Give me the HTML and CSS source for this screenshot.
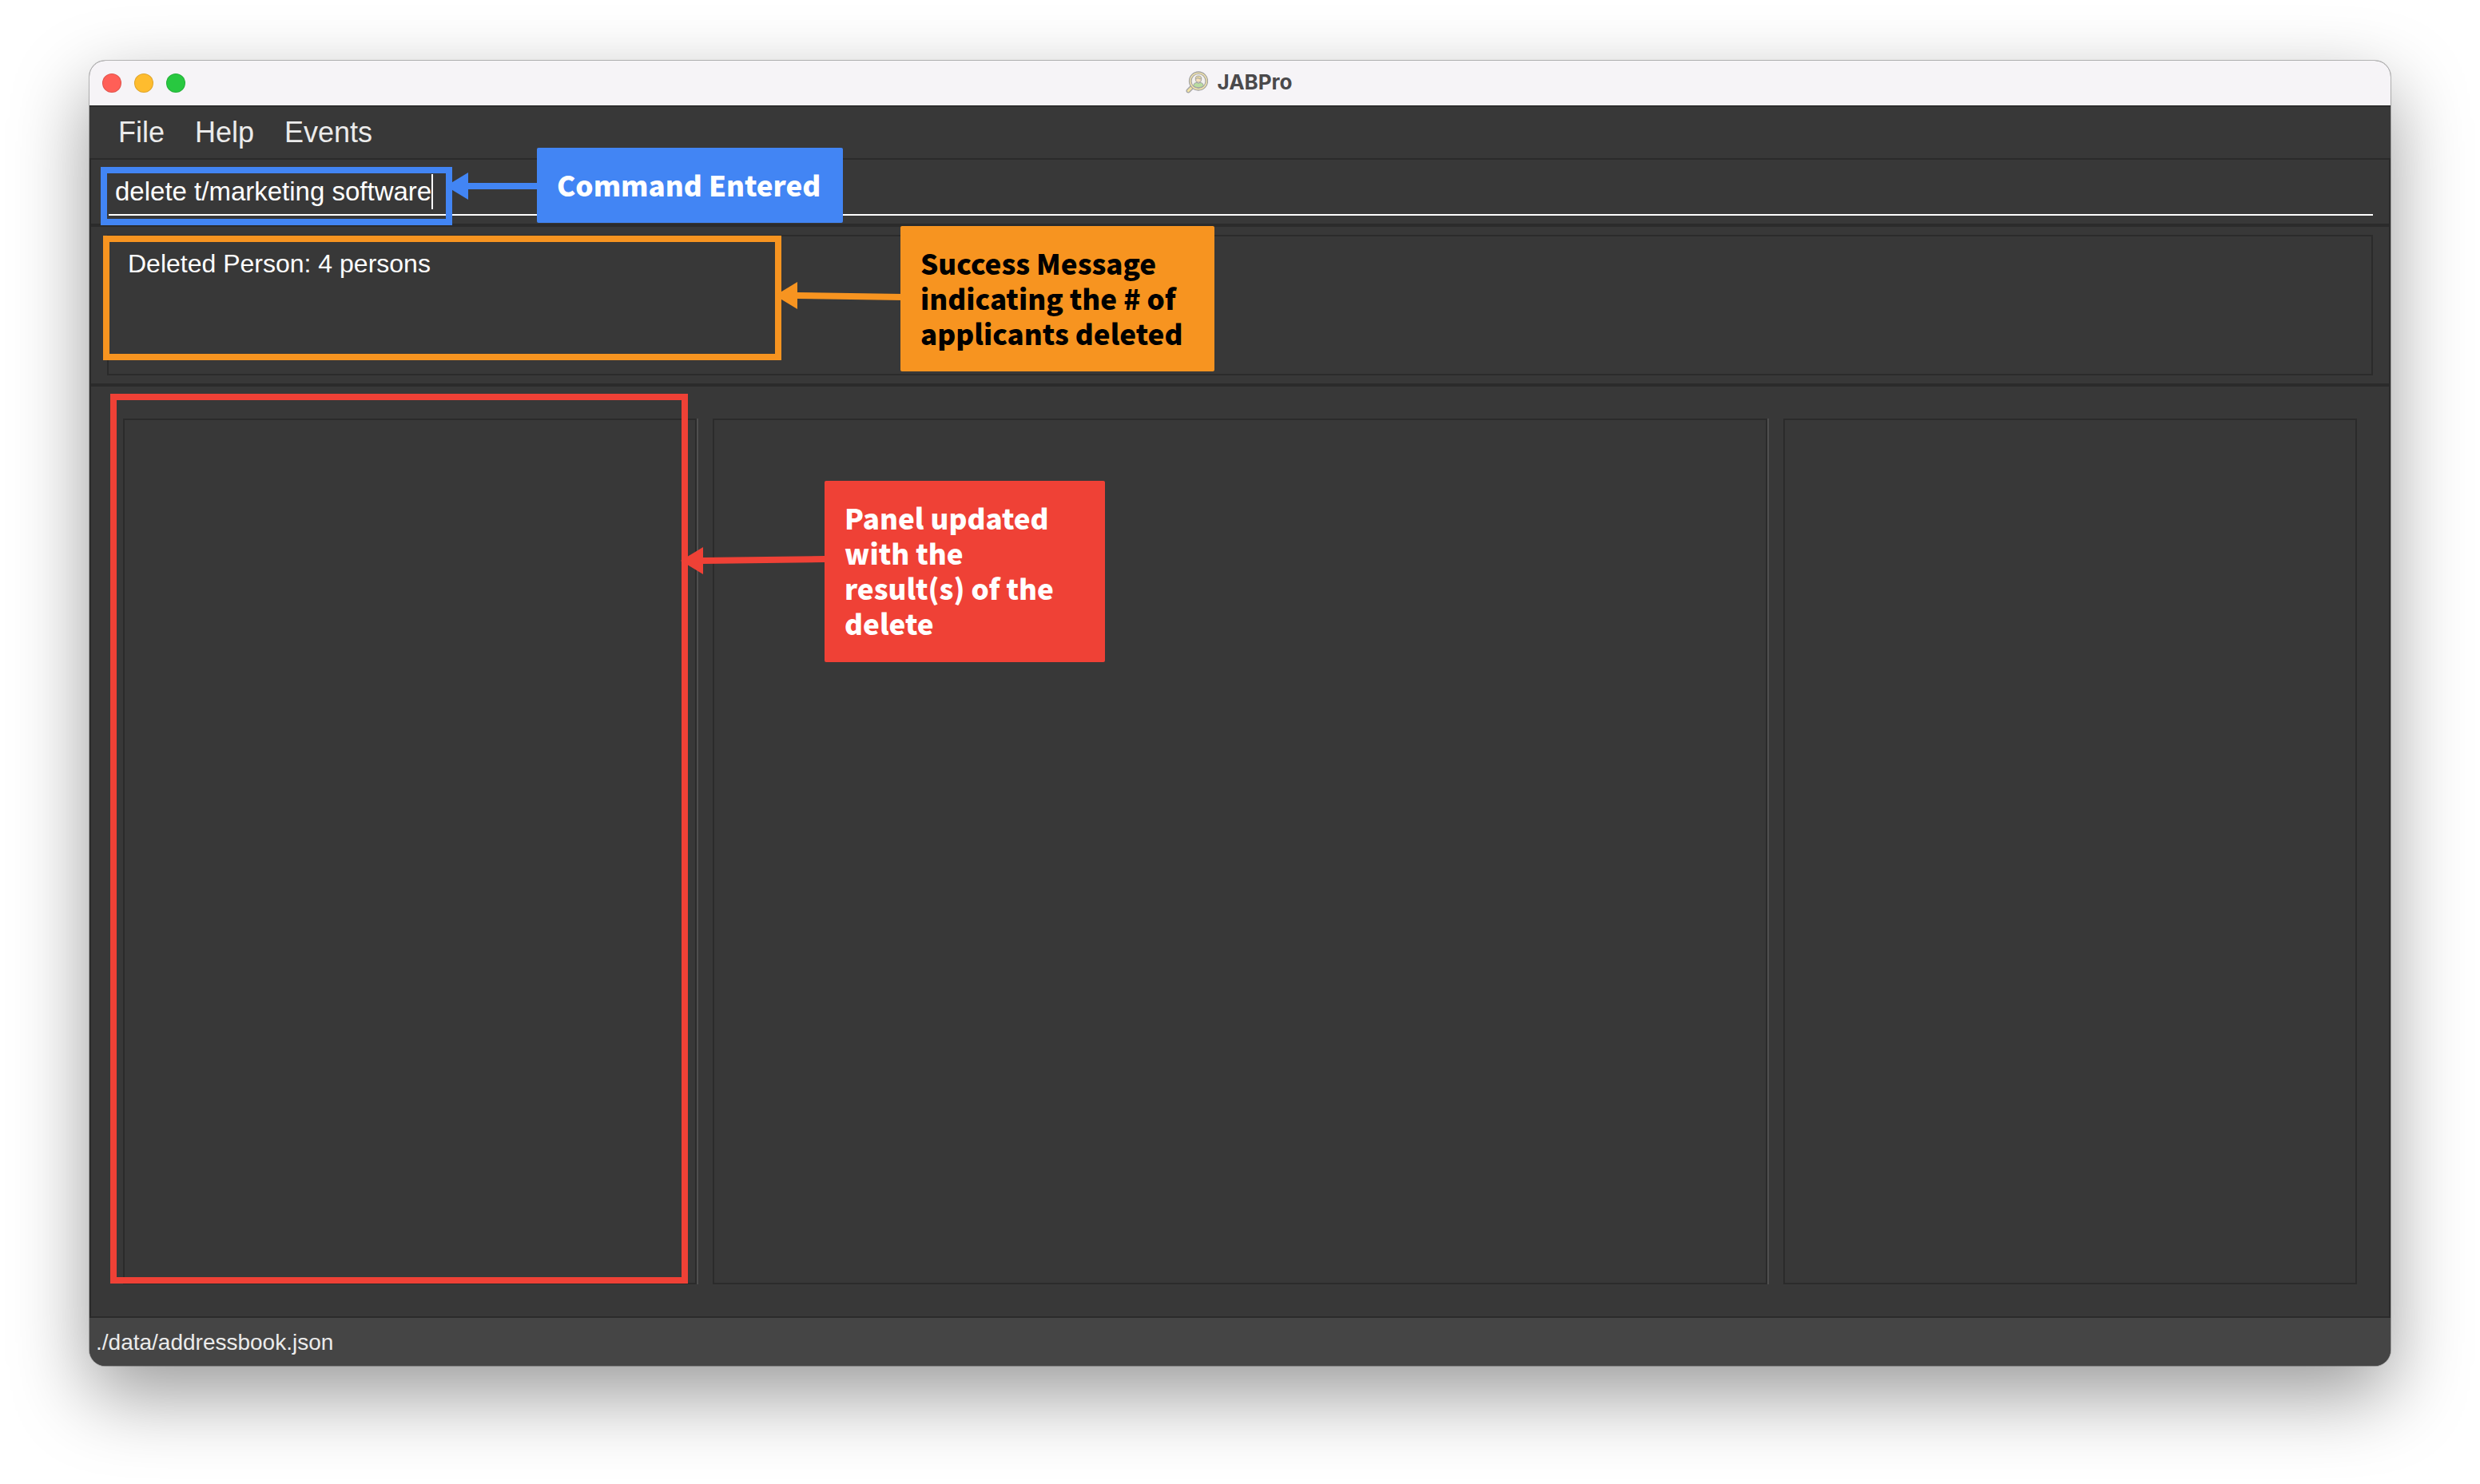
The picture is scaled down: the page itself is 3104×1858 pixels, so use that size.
FILE: index.html
```html
<!DOCTYPE html>
<html lang="en">
<head>
<meta charset="utf-8">
<title>JABPro</title>
<link rel="stylesheet" href="styles.css">
</head>
<body>
<main class="window">
  <header class="titlebar">
    <div class="lights">
      <button class="light close" aria-label="Close"></button>
      <button class="light minimize" aria-label="Minimize"></button>
      <button class="light zoom" aria-label="Zoom"></button>
    </div>
    <h1 class="title">
      <svg class="logo" viewBox="0 0 28 28" aria-hidden="true">
        <path d="M7.500 17.500 10.500 20.500 4.500 26.500Q3 27.500 1.500 26 .5 24.500 2 23Z" fill="#f3e3a4" stroke="#a3a3a3" stroke-width="1.300"/>
        <circle cx="16" cy="12.500" r="11.500" fill="#f5e6aa" stroke="#a3a3a3" stroke-width="1.300"/>
        <circle cx="16" cy="12.500" r="9" fill="#f3f1ee" stroke="#a3a3a3" stroke-width="1.200"/>
        <path d="M9.500 18.500Q10 14.500 14 14.200L16 15.500 18 14.200Q22 14.500 22.500 18.500 16 23 9.500 18.500Z" fill="#b9dca0" stroke="#a3a3a3" stroke-width="1"/>
        <circle cx="16" cy="10.500" r="3.700" fill="#f7e2bd" stroke="#a3a3a3" stroke-width="1"/>
        <path d="M12.300 10Q12 6 16 6 20 6 19.700 10 17 10 15 8.500 14 10 12.300 10Z" fill="#e4d6a0" stroke="#a3a3a3" stroke-width="1"/>
      </svg>
      JABPro
    </h1>
  </header>

  <nav class="menubar">
    <button class="menu">File</button>
    <button class="menu">Help</button>
    <button class="menu">Events</button>
  </nav>

  <section class="pane command">
    <div class="field">
      <input class="field-input" type="text" aria-label="Command" value="delete t/marketing software" size="27">
      <span class="caret"></span>
    </div>
  </section>

  <section class="pane result">
    <output class="result-text">Deleted Person: 4 persons</output>
  </section>

  <section class="pane lists">
    <div class="list side"></div>
    <div class="divider"></div>
    <div class="list center"></div>
    <div class="divider"></div>
    <div class="list side"></div>
  </section>

  <footer class="statusbar">./data/addressbook.json</footer>

  <div class="frame frame-command"></div>
  <div class="frame frame-result"></div>
  <div class="frame frame-panel"></div>
  <svg class="arrow arrow-command" viewBox="0 0 116 34" aria-hidden="true">
    <path d="M0 17 28 0V34Z"/><path d="M28 13H116V21H28Z"/>
  </svg>
  <svg class="arrow arrow-result" viewBox="0 0 160 34" aria-hidden="true">
    <path d="M0 17 28 0V34Z"/><path d="M28 13 160 15V23L28 21Z"/>
  </svg>
  <svg class="arrow arrow-panel" viewBox="0 0 180 34" aria-hidden="true">
    <path d="M0 17 28 0V34Z"/><path d="M28 13 180 11V19L28 21Z"/>
  </svg>
  <p class="note note-command">Command Entered</p>
  <p class="note note-result">Success Message indicating the # of applicants deleted</p>
  <p class="note note-panel">Panel updated with the result(s) of the delete</p>
</main>
</body>
</html>
```
FILE: styles.css
```css
* {
  box-sizing: border-box;
}

body {
  display: flex;
  min-height: 100vh;
  margin: 0;
  padding: 76px 112px 148px;
  background: #fff;
  font-family: "Liberation Sans", Arial, sans-serif;
}

button,
input {
  margin: 0;
  padding: 0;
  border: 0;
  background: none;
  color: inherit;
  font: inherit;
}

.window {
  position: relative;
  display: flex;
  flex: 1;
  flex-direction: column;
  border-radius: 20px;
  background: #383838;
  box-shadow: 0 0 0 1px rgba(0, 0, 0, 0.25), 0 36px 96px rgba(0, 0, 0, 0.4);
}

.titlebar {
  display: grid;
  grid-template-columns: 1fr auto 1fr;
  align-items: center;
  height: 57px;
  padding: 0 16px;
  border-bottom: 1px solid #111;
  border-radius: 20px 20px 0 0;
  background: #f6f4f7;
}

.lights {
  display: flex;
  gap: 16px;
}

.light {
  width: 24px;
  height: 24px;
  border: 1px solid rgba(0, 0, 0, 0.12);
  border-radius: 50%;
}

.close {
  background: #ff5f57;
}

.minimize {
  background: #febc2e;
}

.zoom {
  background: #28c840;
}

.title {
  display: flex;
  align-items: center;
  gap: 11px;
  margin: 0;
  padding: 0 2px 2px 0;
  color: #4a494b;
  font-family: Inter, sans-serif;
  font-size: 26px;
  font-weight: 700;
  line-height: 32px;
}

.logo {
  width: 28px;
  height: 28px;
}

.menubar {
  display: flex;
  gap: 38px;
  height: 67px;
  padding: 0 36px;
  border-bottom: 2px solid #2b2b2b;
  color: #ebebeb;
  font-size: 36px;
  line-height: 65px;
}

.pane {
  border: 2px solid #2b2b2b;
  border-width: 0 2px 2px;
}

.command {
  height: 82px;
  padding: 12px 20px 10px 22px;
}

.field {
  display: flex;
  align-items: flex-start;
  height: 58px;
  padding: 6px 0 0 8px;
  border-bottom: 2px solid #fff;
}

.field-input {
  field-sizing: content;
  height: 44px;
  color: #fff;
  font-size: 33px;
  line-height: 44px;
  outline: 0;
}

.caret {
  width: 2px;
  height: 44px;
  background: #fff;
}

.result {
  height: 200px;
  padding: 10px 20px;
  border-top-width: 2px;
}

.result-text {
  display: block;
  height: 176px;
  padding: 14px 24px;
  border: 2px solid #2b2b2b;
  color: #fff;
  font-size: 32px;
  line-height: 40px;
}

.lists {
  display: flex;
  flex: 1;
  padding: 40px;
  border-top-width: 2px;
}

.list {
  border: 2px solid #2b2b2b;
}

.side {
  flex: 714;
}

.center {
  flex: 1316;
}

.divider {
  width: 20px;
  border-left: 2px solid #4f4f4f;
}

.statusbar {
  height: 60px;
  padding: 0 8px;
  border-radius: 0 0 20px 20px;
  background: #454545;
  color: #ebebeb;
  font-size: 28px;
  line-height: 62px;
}

/* Callouts laid over the application window */

.frame,
.arrow,
.note {
  position: absolute;
}

.frame {
  border: 8px solid;
}

.frame-command {
  top: 133px;
  left: 14px;
  width: 440px;
  height: 73px;
  border-color: #4285f4;
}

.frame-result {
  top: 219px;
  left: 17px;
  width: 849px;
  height: 156px;
  border-color: #f79420;
}

.frame-panel {
  top: 417px;
  left: 26px;
  width: 723px;
  height: 1114px;
  border-color: #ef4136;
}

.arrow {
  height: 34px;
}

.arrow-command {
  top: 140px;
  left: 446px;
  width: 116px;
  fill: #4285f4;
}

.arrow-result {
  top: 277px;
  left: 858px;
  width: 160px;
  fill: #f79420;
}

.arrow-panel {
  top: 609px;
  left: 740px;
  width: 180px;
  fill: #ef4136;
}

.note {
  margin: 0;
  padding: 24px 25px;
  border-radius: 2px;
  color: #fff;
  font-family: "Noto Sans CJK SC", sans-serif;
  font-size: 35px;
  font-weight: 900;
  line-height: 44px;
}

.note-command {
  top: 109px;
  left: 560px;
  width: 383px;
  height: 94px;
  background: #4285f4;
}

.note-result {
  top: 207px;
  left: 1015px;
  width: 393px;
  height: 182px;
  background: #f79420;
  color: #000;
}

.note-panel {
  top: 526px;
  left: 920px;
  width: 351px;
  height: 227px;
  background: #ef4136;
}
```
